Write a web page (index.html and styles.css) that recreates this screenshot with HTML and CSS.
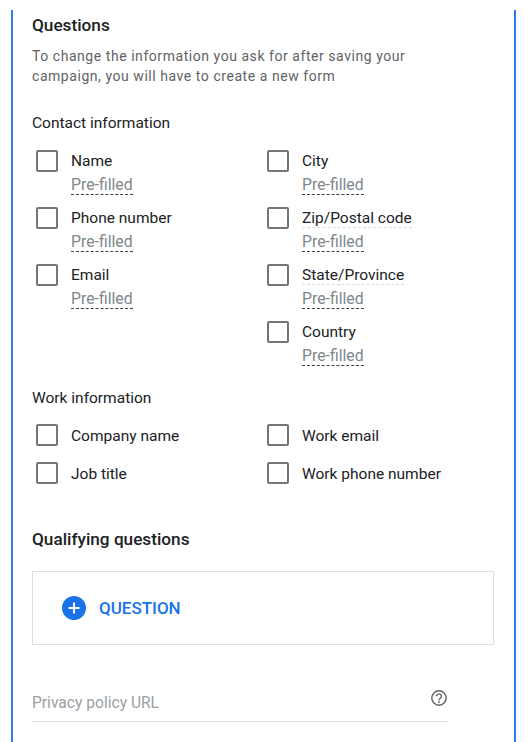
FILE: index.html
```html
<!DOCTYPE html>
<html lang="en">
<head>
<meta charset="UTF-8">
<meta name="viewport" content="width=device-width, initial-scale=1.0">
<title>Questions</title>
<link rel="stylesheet" href="styles.css">
</head>
<body>
    <div class="panel">
        <h2 class="title">Questions</h2>
        <p class="hint">To change the information you ask for after saving your campaign, you will have to create a new form</p>

        <!-- Contact information -->
        <div class="group-label">Contact information</div>
        <div class="fields">
            <div class="column">
                <div class="field">
                    <span class="box"></span>
                    <div>
                        <div class="name">Name</div>
                        <span class="prefilled">Pre-filled</span>
                    </div>
                </div>
                <div class="field">
                    <span class="box"></span>
                    <div>
                        <div class="name">Phone number</div>
                        <span class="prefilled">Pre-filled</span>
                    </div>
                </div>
                <div class="field">
                    <span class="box"></span>
                    <div>
                        <div class="name">Email</div>
                        <span class="prefilled">Pre-filled</span>
                    </div>
                </div>
            </div>
            <div class="column">
                <div class="field">
                    <span class="box"></span>
                    <div>
                        <div class="name">City</div>
                        <span class="prefilled">Pre-filled</span>
                    </div>
                </div>
                <div class="field">
                    <span class="box"></span>
                    <div>
                        <div class="name"><span class="dotted">Zip/Postal code</span></div>
                        <span class="prefilled">Pre-filled</span>
                    </div>
                </div>
                <div class="field">
                    <span class="box"></span>
                    <div>
                        <div class="name"><span class="dotted">State/Province</span></div>
                        <span class="prefilled">Pre-filled</span>
                    </div>
                </div>
                <div class="field">
                    <span class="box"></span>
                    <div>
                        <div class="name">Country</div>
                        <span class="prefilled">Pre-filled</span>
                    </div>
                </div>
            </div>
        </div>

        <!-- Work information -->
        <div class="group-label work-label">Work information</div>
        <div class="fields work-fields">
            <div class="column">
                <div class="field short"><span class="box"></span><div class="name">Company name</div></div>
                <div class="field short"><span class="box"></span><div class="name">Job title</div></div>
            </div>
            <div class="column">
                <div class="field short"><span class="box"></span><div class="name">Work email</div></div>
                <div class="field short"><span class="box"></span><div class="name">Work phone number</div></div>
            </div>
        </div>

        <h2 class="title qualifying">Qualifying questions</h2>
        <div class="question-box">
            <svg class="plus" width="24" height="24" viewBox="0 0 24 24">
                <circle cx="12" cy="12" r="12" fill="#1a73e8"/>
                <path d="M12 6.5v11M6.5 12h11" stroke="#fff" stroke-width="2" fill="none"/>
            </svg>
            <span class="question-text">QUESTION</span>
        </div>

        <div class="privacy">
            <span class="privacy-label">Privacy policy URL</span>
            <svg class="help" width="18" height="18" viewBox="0 0 18 18">
                <circle cx="9" cy="9" r="7.2" fill="none" stroke="#5f6368" stroke-width="1.4"/>
                <path d="M6.6 7.3a2.4 2.4 0 1 1 3.9 1.9c-.9.7-1.5 1.1-1.5 2.3" fill="none" stroke="#5f6368" stroke-width="1.4"/>
                <circle cx="9" cy="13.2" r=".9" fill="#5f6368"/>
            </svg>
        </div>
    </div>
</body>
</html>
```

FILE: styles.css
```css
body {
    margin: 0;
    background-color: #fff;
    font-family: Roboto, "Liberation Sans", sans-serif;
    color: #202124;
}
.panel {
    width: 505px;
    height: 732px;
    box-sizing: border-box;
    margin: 10px 0 0 11px;
    padding: 4px 19px 0 19px;
    border-left: 2px solid #2f7de8;
    border-right: 2px solid #2f7de8;
    overflow: hidden;
}
.title {
    margin: 0;
    font-size: 17.2px;
    line-height: 22px;
    font-weight: 500;
}
.hint {
    margin: 10px 0 0;
    width: 400px;
    font-size: 14px;
    line-height: 20px;
    letter-spacing: 0.55px;
    color: #5f6368;
}
.group-label {
    margin-top: 27px;
    font-size: 15.5px;
    line-height: 20px;
}
.work-label {
    margin-top: 10px;
}
.fields {
    display: flex;
    margin-top: 17px;
}
.work-fields {
    margin-top: 16px;
}
.column {
    width: 231px;
    padding-left: 4px;
    box-sizing: border-box;
}
.field {
    display: flex;
    height: 57px;
}
.field.short {
    height: 38px;
}
.field.short .name {
    padding-top: 1px;
}
.box {
    width: 18px;
    height: 18px;
    margin-right: 13px;
    border: 2px solid #757575;
    border-radius: 2px;
    flex-shrink: 0;
}
.name {
    font-size: 15.5px;
    line-height: 22px;
}
.dotted {
    border-bottom: 1px dashed #dadce0;
}
.prefilled {
    display: inline-block;
    margin-top: 3px;
    font-size: 15.8px;
    line-height: 19px;
    color: #80868b;
    border-bottom: 1px dashed #3c4043;
}
.qualifying {
    margin-top: 28px;
}
.question-box {
    display: flex;
    align-items: center;
    height: 74px;
    box-sizing: border-box;
    margin-top: 21px;
    width: 462px;
    padding-left: 29px;
    border: 1px solid #e0e0e0;
}
.question-text {
    margin-left: 13px;
    font-size: 17px;
    font-weight: 500;
    color: #1a73e8;
}
.privacy {
    display: flex;
    align-items: center;
    justify-content: space-between;
    width: 416px;
    height: 43px;
    box-sizing: border-box;
    margin-top: 34px;
    border-bottom: 1px solid #e0e0e0;
}
.privacy-label {
    margin-top: 5px;
    font-size: 15.6px;
    color: #9aa0a6;
}
.help {
    margin-bottom: 5px;
}
```
